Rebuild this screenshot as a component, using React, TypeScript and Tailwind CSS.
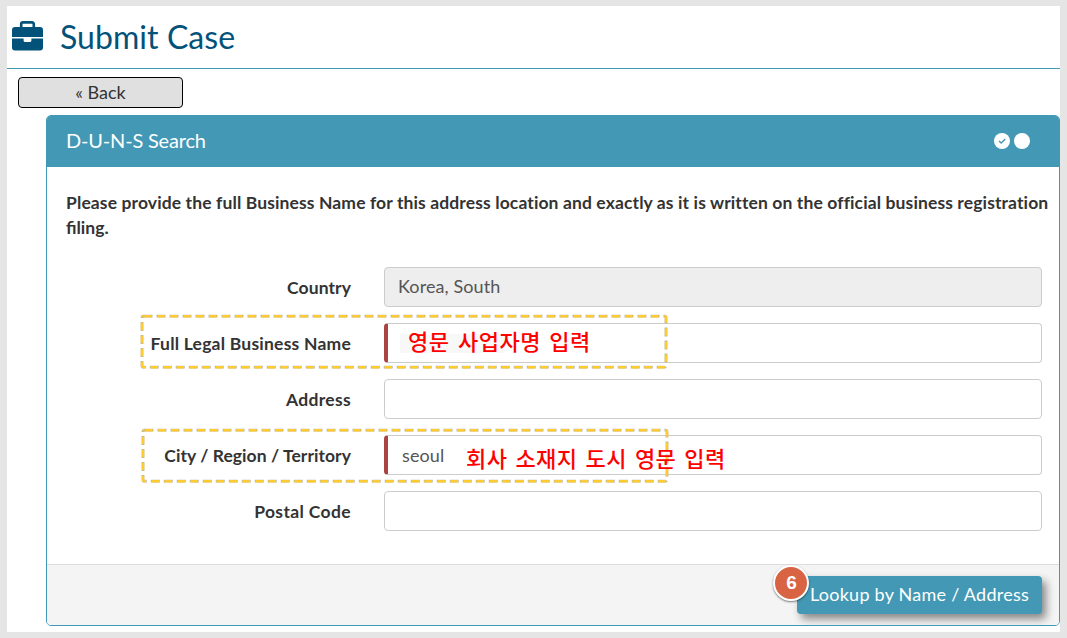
import React from "react";

const fields = [
  { label: "Country", ls: "tracking-[0.1px] -mr-[0.1px]", value: "Korea, South", kind: "disabled" },
  { label: "Full Legal Business Name", ls: "tracking-[0.22px]", value: "", kind: "required" },
  { label: "Address", ls: "tracking-[0.3px]", value: "", kind: "plain" },
  { label: "City / Region / Territory", ls: "tracking-[0.06px]", value: "seoul", kind: "required" },
  { label: "Postal Code", ls: "tracking-[0.36px]", value: "", kind: "plain" },
];

function Briefcase() {
  return (
    <svg width="31" height="30" viewBox="0 0 31 30" className="mb-[2px] block shrink-0">
      <path d="M9.2 7V3.2a1.8 1.8 0 0 1 1.8-1.8h9a1.8 1.8 0 0 1 1.8 1.8V7" fill="none" stroke="#03527a" strokeWidth="2.6" />
      <path d="M3 6h25a3 3 0 0 1 3 3v7H0V9a3 3 0 0 1 3-3Z" fill="#03527a" />
      <path d="M0 17.4h11.6v2a1.6 1.6 0 0 0 1.6 1.6h4.6a1.6 1.6 0 0 0 1.6-1.6v-2H31v9a3 3 0 0 1-3 3H3a3 3 0 0 1-3-3Z" fill="#03527a" />
    </svg>
  );
}

function Highlight({ className }: { className: string }) {
  return (
    <svg width="528" height="55" className={`pointer-events-none absolute ${className}`}>
      <rect x="2" y="2.2" width="524" height="51" rx="1.5" fill="none" stroke="#b9b7a8" strokeWidth="2.8" strokeDasharray="9 4" />
      <rect x="2" y="2.2" width="524" height="51" rx="1.5" fill="none" stroke="#ffcb2e" strokeWidth="2.4" strokeDasharray="7.4 5.6" strokeDashoffset="-0.8" />
    </svg>
  );
}

export default function App() {
  return (
    <div className="h-[638px] w-[1067px] overflow-hidden bg-[#e5e5e5] pt-1.5 pl-[7px] font-['Lato',sans-serif]">
      <div className="h-[626px] w-[1053px] bg-white">
        <header className="flex h-[63px] items-center border-b border-[#4298b5] pl-[5px]">
          <Briefcase />
          <h1 className="ml-[17px] whitespace-nowrap text-[32px] leading-none text-[#03527a]"><span className="tracking-[0.06px]">Submit Case</span></h1>
        </header>
        <button className="mt-2 ml-[11px] block h-[31px] w-[165px] rounded-[4px] border border-black bg-[#e0e0e0] pb-[2px] text-[18px] leading-none text-[#333]">
          « Back
        </button>
        <section className="mt-[7px] ml-[39px] flex h-[511px] flex-col overflow-hidden rounded-[5px] border border-[#4298b5]">
          <div className="flex h-[51px] shrink-0 items-center justify-between bg-[#4298b5] pr-[29px] pb-px pl-[19px] text-white">
            <h2 className="pb-[2px] text-[20px] leading-none tracking-[-0.18px]">D-U-N-S Search</h2>
            <div className="flex gap-1">
              <svg width="16" height="16" viewBox="0 0 16 16">
                <circle cx="8" cy="8" r="8" fill="#fff" />
                <path d="m5 8 2.2 2.1L11.2 6" fill="none" stroke="#4298b5" strokeWidth="1.4" />
              </svg>
              <svg width="16" height="16" viewBox="0 0 16 16">
                <circle cx="8" cy="8" r="8" fill="#fff" />
              </svg>
            </div>
          </div>
          <div className="flex grow flex-col">
            <p className="mt-[23px] ml-[19px] text-[17.5px] leading-[25px] font-bold whitespace-nowrap text-[#333]">
              <span className="tracking-[0.116px]">Please provide the full Business Name for this address location and exactly as it is written on the official business registration</span>
              <br />
              <span>filing.</span>
            </p>
            <div className="mt-[27px] flex flex-col gap-4 pr-[17px]">
              {fields.map((f) => (
                <div key={f.label} className="flex h-10 items-center">
                  <span className="w-[304px] shrink-0 pt-[2px] text-right text-[17.5px] leading-none font-bold text-[#333]"><span className={f.ls}>{f.label}</span></span>
                  <div
                    className={
                      "ml-[33px] flex h-10 grow items-center rounded-[4px] border border-[#ccc] text-[18px] leading-none tracking-[0.1px] text-[#555] " +
                      (f.kind === "disabled" ? "bg-[#eee] pb-[2px] pl-[13px]" : f.kind === "required" ? "border-l-4 border-l-[#a94442] pl-[14px]" : "bg-white pl-[13px]")
                    }
                  >
                    <span>{f.value}</span>
                  </div>
                </div>
              ))}
            </div>
          </div>
          <footer className="flex h-[61px] shrink-0 justify-end border-t border-[#ddd] bg-[#f4f4f4] pt-[11px] pr-[17px]">
            <button className="h-[38px] w-[245px] rounded-[4px] bg-[#4298b5] pb-[2px] text-[18px] leading-none tracking-[0.25px] whitespace-nowrap text-white shadow-[4px_5px_9px_rgba(0,0,0,0.45)]">
              Lookup by Name / Address
            </button>
          </footer>
        </section>
      </div>
      <div className="absolute top-[334px] left-[400px] h-[19px] w-[105px] bg-[#f8f8f8]" />
      <Highlight className="top-[314px] left-[140px]" />
      <Highlight className="top-[428px] left-[141px]" />
      <span className="absolute top-[326px] left-[408px] font-['Noto_Sans_CJK_KR',sans-serif] text-[22px] leading-7 font-medium tracking-[0.5px] [word-spacing:3px] whitespace-nowrap text-[#f00]">영문 사업자명 입력</span>
      <span className="absolute top-[443px] left-[466px] font-['Noto_Sans_CJK_KR',sans-serif] text-[22px] leading-7 font-medium tracking-[0.4px] [word-spacing:2.8px] whitespace-nowrap text-[#f00]">회사 소재지 도시 영문 입력</span>
      <div className="absolute top-[565px] left-[773px] flex size-9 items-center justify-center rounded-full border-2 border-white bg-[#d96444] pl-px font-['Liberation_Sans',sans-serif] text-[19px] font-bold text-white shadow-[0_1px_2px_rgba(0,0,0,0.5)]">6</div>
    </div>
  );
}
